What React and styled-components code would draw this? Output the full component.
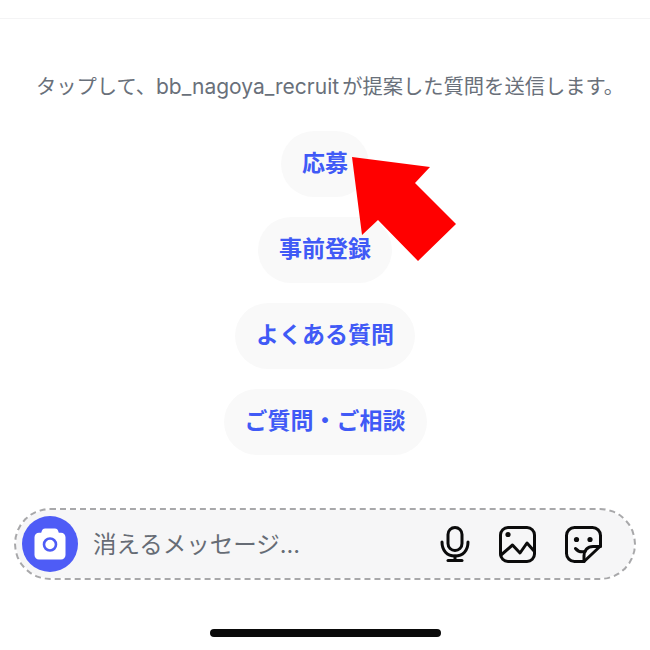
import React from 'react'
import styled, { createGlobalStyle } from 'styled-components'

const suggestions = ['応募', '事前登録', 'よくある質問', 'ご質問・ご相談']

function App() {
  return (
    <Page>
      <GlobalStyle />
      <Hint>タップして、<Handle>bb_nagoya_recruit</Handle>が提案した質問を送信します。</Hint>
      <Suggestions>
        {suggestions.map((label) => (
          <Pill key={label}>{label}</Pill>
        ))}
      </Suggestions>
      <Composer>
        <CameraButton>
          <svg width="34" height="34" viewBox="0 0 34 34">
            <path
              d="M12 1.500h10c1.500 0 2.500.8 3 2l.8 2.300H28c2.500 0 4.500 2 4.500 4.500v17.700c0 2.500-2 4.500-4.500 4.500H6c-2.500 0-4.500-2-4.500-4.500V10.300c0-2.500 2-4.500 4.500-4.500h2.200L9 3.500c.5-1.200 1.500-2 3-2z"
              fill="#fff"
            />
            <circle cx="17" cy="17.500" r="6" fill="none" stroke="#4e5cf6" strokeWidth="2.600" />
          </svg>
        </CameraButton>
        <Placeholder>消えるメッセージ...</Placeholder>
        <Actions>
          <svg width="30" height="36" viewBox="0 0 30 36" fill="none" stroke="#0b0b0b" strokeWidth="3" strokeLinecap="round">
            <rect x="8" y="1.500" width="14" height="23" rx="7" />
            <path d="M2 16c0 8.500 5 14 13 14s13-5.500 13-14" />
            <path d="M15 30v4.500" />
            <path d="M8 34.500h14" />
          </svg>
          <svg width="37" height="37" viewBox="0 0 37 37" fill="none" stroke="#0b0b0b" strokeWidth="3" strokeLinejoin="round" strokeLinecap="round">
            <rect x="1.500" y="1.500" width="34" height="34" rx="7.500" />
            <path d="M2 29l11.500-10 7.500 8 7-10 7.500 8.500" />
            <circle cx="9" cy="8.500" r="2.600" fill="#0b0b0b" stroke="none" />
          </svg>
          <svg width="37" height="37" viewBox="0 0 37 37" fill="none" stroke="#0b0b0b" strokeWidth="3" strokeLinejoin="round" strokeLinecap="round">
            <path d="M9.500 1.500h18c4.400 0 8 3.600 8 8V20L19 35.500H9.500c-4.400 0-8-3.600-8-8v-18c0-4.400 3.600-8 8-8z" />
            <path d="M35.500 20.500H28c-5.500 0-9 4-9 9v6" />
            <path d="M10.500 22.500c2 2.600 5.500 3.800 9.500 3" />
            <circle cx="11.500" cy="13.500" r="2.600" fill="#0b0b0b" stroke="none" />
            <circle cx="25" cy="13.500" r="2.600" fill="#0b0b0b" stroke="none" />
          </svg>
        </Actions>
      </Composer>
      <HomeBar />
      <Arrow width="650" height="650" viewBox="0 0 650 650">
        <polygon points="352,157 430,167 415,183 456,224 418,261 378,220 362,235" fill="#ff0000" />
      </Arrow>
    </Page>
  )
}

export default App

const GlobalStyle = createGlobalStyle`
  html, body {
    margin: 0;
    padding: 0;
    background: #fff;
  }
`

const Page = styled.div`
  position: relative;
  box-sizing: border-box;
  width: 650px;
  height: 650px;
  overflow: hidden;
  display: flex;
  flex-direction: column;
  align-items: center;
  padding-top: 19px;
  font-family: "Inter", "Noto Sans CJK JP", sans-serif;
  background: linear-gradient(#f4f4f5, #f4f4f5) 0 18px / 100% 1px no-repeat #fff;
`

const Hint = styled.p`
  margin: 55px 0 0 10px;
  font-size: 20.300px;
  line-height: 26px;
  color: #69707a;
  white-space: nowrap;
`

const Handle = styled.span`
  margin-right: 3px;
  font-size: 21px;
`

const Suggestions = styled.div`
  display: flex;
  flex-direction: column;
  align-items: center;
  gap: 20px;
  margin-top: 31px;
`

const Pill = styled.div`
  box-sizing: border-box;
  height: 66px;
  padding: 0 21px 6px;
  display: flex;
  align-items: center;
  border-radius: 33px;
  background: #f9f9f9;
  color: #405af6;
  font-size: 23px;
  font-weight: 700;
  white-space: nowrap;
`

const Composer = styled.div`
  box-sizing: border-box;
  width: 622px;
  height: 72px;
  margin-top: 53px;
  padding: 0 32px 0 6px;
  display: flex;
  align-items: center;
  border: 2px dashed #a8a8aa;
  border-radius: 36px;
  background: #f6f6f7;
  background-clip: padding-box;
`

const CameraButton = styled.div`
  width: 56px;
  height: 56px;
  flex: none;
  display: flex;
  align-items: center;
  justify-content: center;
  border-radius: 50%;
  background: #4e5cf6;
`

const Placeholder = styled.div`
  flex: 1;
  margin-left: 15px;
  padding-bottom: 3px;
  font-size: 23.500px;
  color: #666c75;
  white-space: nowrap;
`

const Actions = styled.div`
  display: flex;
  align-items: center;
  gap: 29px;
`

const HomeBar = styled.div`
  width: 231px;
  height: 8px;
  margin-top: 49px;
  border-radius: 4px;
  background: #0a0a0a;
`

const Arrow = styled.svg`
  position: absolute;
  top: 0;
  left: 0;
  pointer-events: none;
`
